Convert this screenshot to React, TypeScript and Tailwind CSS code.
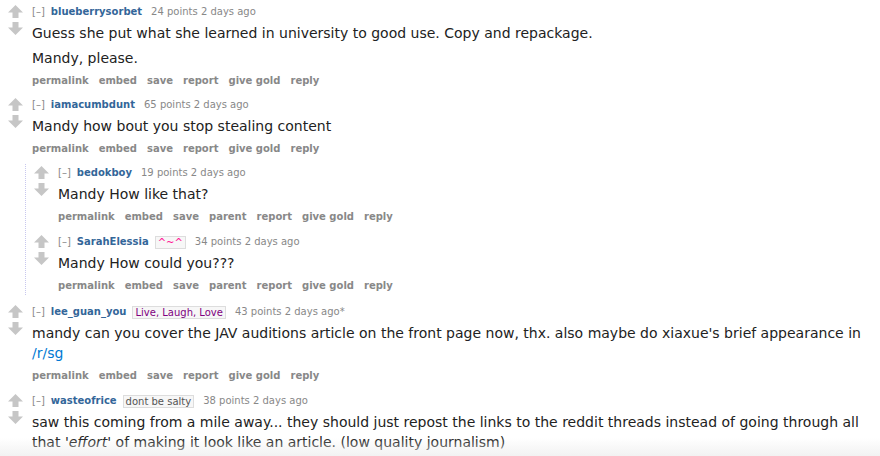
import React from "react";

const Arrows = () => (
  <div className="flex flex-col w-[15px] shrink-0 ml-[8px] mr-[9px]">
    <svg width="15" height="13" viewBox="0 0 15 13" className="block">
      <path d="M7.5 0 L15 7.5 L10.5 7.5 L10.5 13 L4.5 13 L4.5 7.5 L0 7.5 Z" fill="#c6c6c6" />
    </svg>
    <svg width="15" height="13" viewBox="0 0 15 13" className="block mt-[4px]">
      <path d="M7.5 13 L15 5.5 L10.5 5.5 L10.5 0 L4.5 0 L4.5 5.5 L0 5.5 Z" fill="#c6c6c6" />
    </svg>
  </div>
);

type Flair = { text: string; color: string } | null;

const Tagline = ({ user, flair, points, edited }: { user: string; flair?: Flair; points: string; edited?: boolean }) => (
  <div className="flex items-center h-[14px] text-[10px] leading-[14px] text-[#888] whitespace-nowrap">
    <span className="mr-[6px]">[–]</span>
    <span className="font-bold text-[#369]">{user}</span>
    {flair ? (
      <span
        className="ml-[6px] px-[2px] border border-[#ddd] bg-[#f7f7f7] leading-[11px] text-[10px]"
        style={{ color: flair.color }}
      >
        {flair.text}
      </span>
    ) : null}
    <span className="ml-[9px]">{points} points 2 days ago{edited ? "*" : ""}</span>
  </div>
);

const Buttons = ({ parent }: { parent?: boolean }) => (
  <div className="flex gap-[10px] h-[14px] mt-[6px] text-[10px] leading-[14px] font-bold text-[#888]">
    <span>permalink</span>
    <span>embed</span>
    <span>save</span>
    {parent ? <span>parent</span> : null}
    <span>report</span>
    <span>give gold</span>
    <span>reply</span>
  </div>
);

const Comment = ({
  user,
  flair,
  points,
  edited,
  parent,
  noButtons,
  children,
  className = "",
}: {
  user: string;
  flair?: Flair;
  points: string;
  edited?: boolean;
  parent?: boolean;
  noButtons?: boolean;
  children: React.ReactNode;
  className?: string;
}) => (
  <div className={"flex " + className}>
    <Arrows />
    <div className="flex-1 min-w-0">
      <Tagline user={user} flair={flair} points={points} edited={edited} />
      <div className="mt-[4px] text-[14px] leading-[20px] text-[#222]">{children}</div>
      {noButtons ? null : <Buttons parent={parent} />}
    </div>
  </div>
);

export default function App() {
  return (
    <div
      className="relative w-[880px] h-[456px] overflow-hidden bg-white pt-[5px]"
      style={{ fontFamily: '"DejaVu Sans", Verdana, sans-serif' }}
    >
      <Comment user="blueberrysorbet" points="24">
        <p>Guess she put what she learned in university to good use. Copy and repackage.</p>
        <p className="mt-[5px]">Mandy, please.</p>
      </Comment>

      <Comment user="iamacumbdunt" points="65" className="mt-[10px]">
        <p>Mandy how bout you stop stealing content</p>
      </Comment>

      <div className="ml-[25px] mt-[8px] border-l border-dotted border-[#c8c8ee] pt-[2px] pb-[2px]">
        <Comment user="bedokboy" points="19" parent>
          <p>Mandy How like that?</p>
        </Comment>
        <Comment user="SarahElessia" flair={{ text: "^~^", color: "#ff1493" }} points="34" parent className="mt-[11px]">
          <p>Mandy How could you???</p>
        </Comment>
      </div>

      <Comment
        user="lee_guan_you"
        flair={{ text: "Live, Laugh, Love", color: "#800080" }}
        points="43"
        edited
        className="mt-[10px]"
      >
        <p>
          mandy can you cover the JAV auditions article on the front page now, thx. also maybe do xiaxue's brief appearance in{" "}
          <span className="text-[#0079d3]">/r/sg</span>
        </p>
      </Comment>

      <Comment
        user="wasteofrice"
        flair={{ text: "dont be salty", color: "#545454" }}
        points="38"
        noButtons
        className="mt-[11px]"
      >
        <p>
          saw this coming from a mile away... they should just repost the links to the reddit threads instead of going through all
          that <em>'effort'</em> of making it look like an article. (low quality journalism)
        </p>
      </Comment>

      <div className="pointer-events-none absolute left-0 right-0 bottom-0 h-[18px] bg-gradient-to-b from-white/0 to-[#ececec]/70" />
    </div>
  );
}
